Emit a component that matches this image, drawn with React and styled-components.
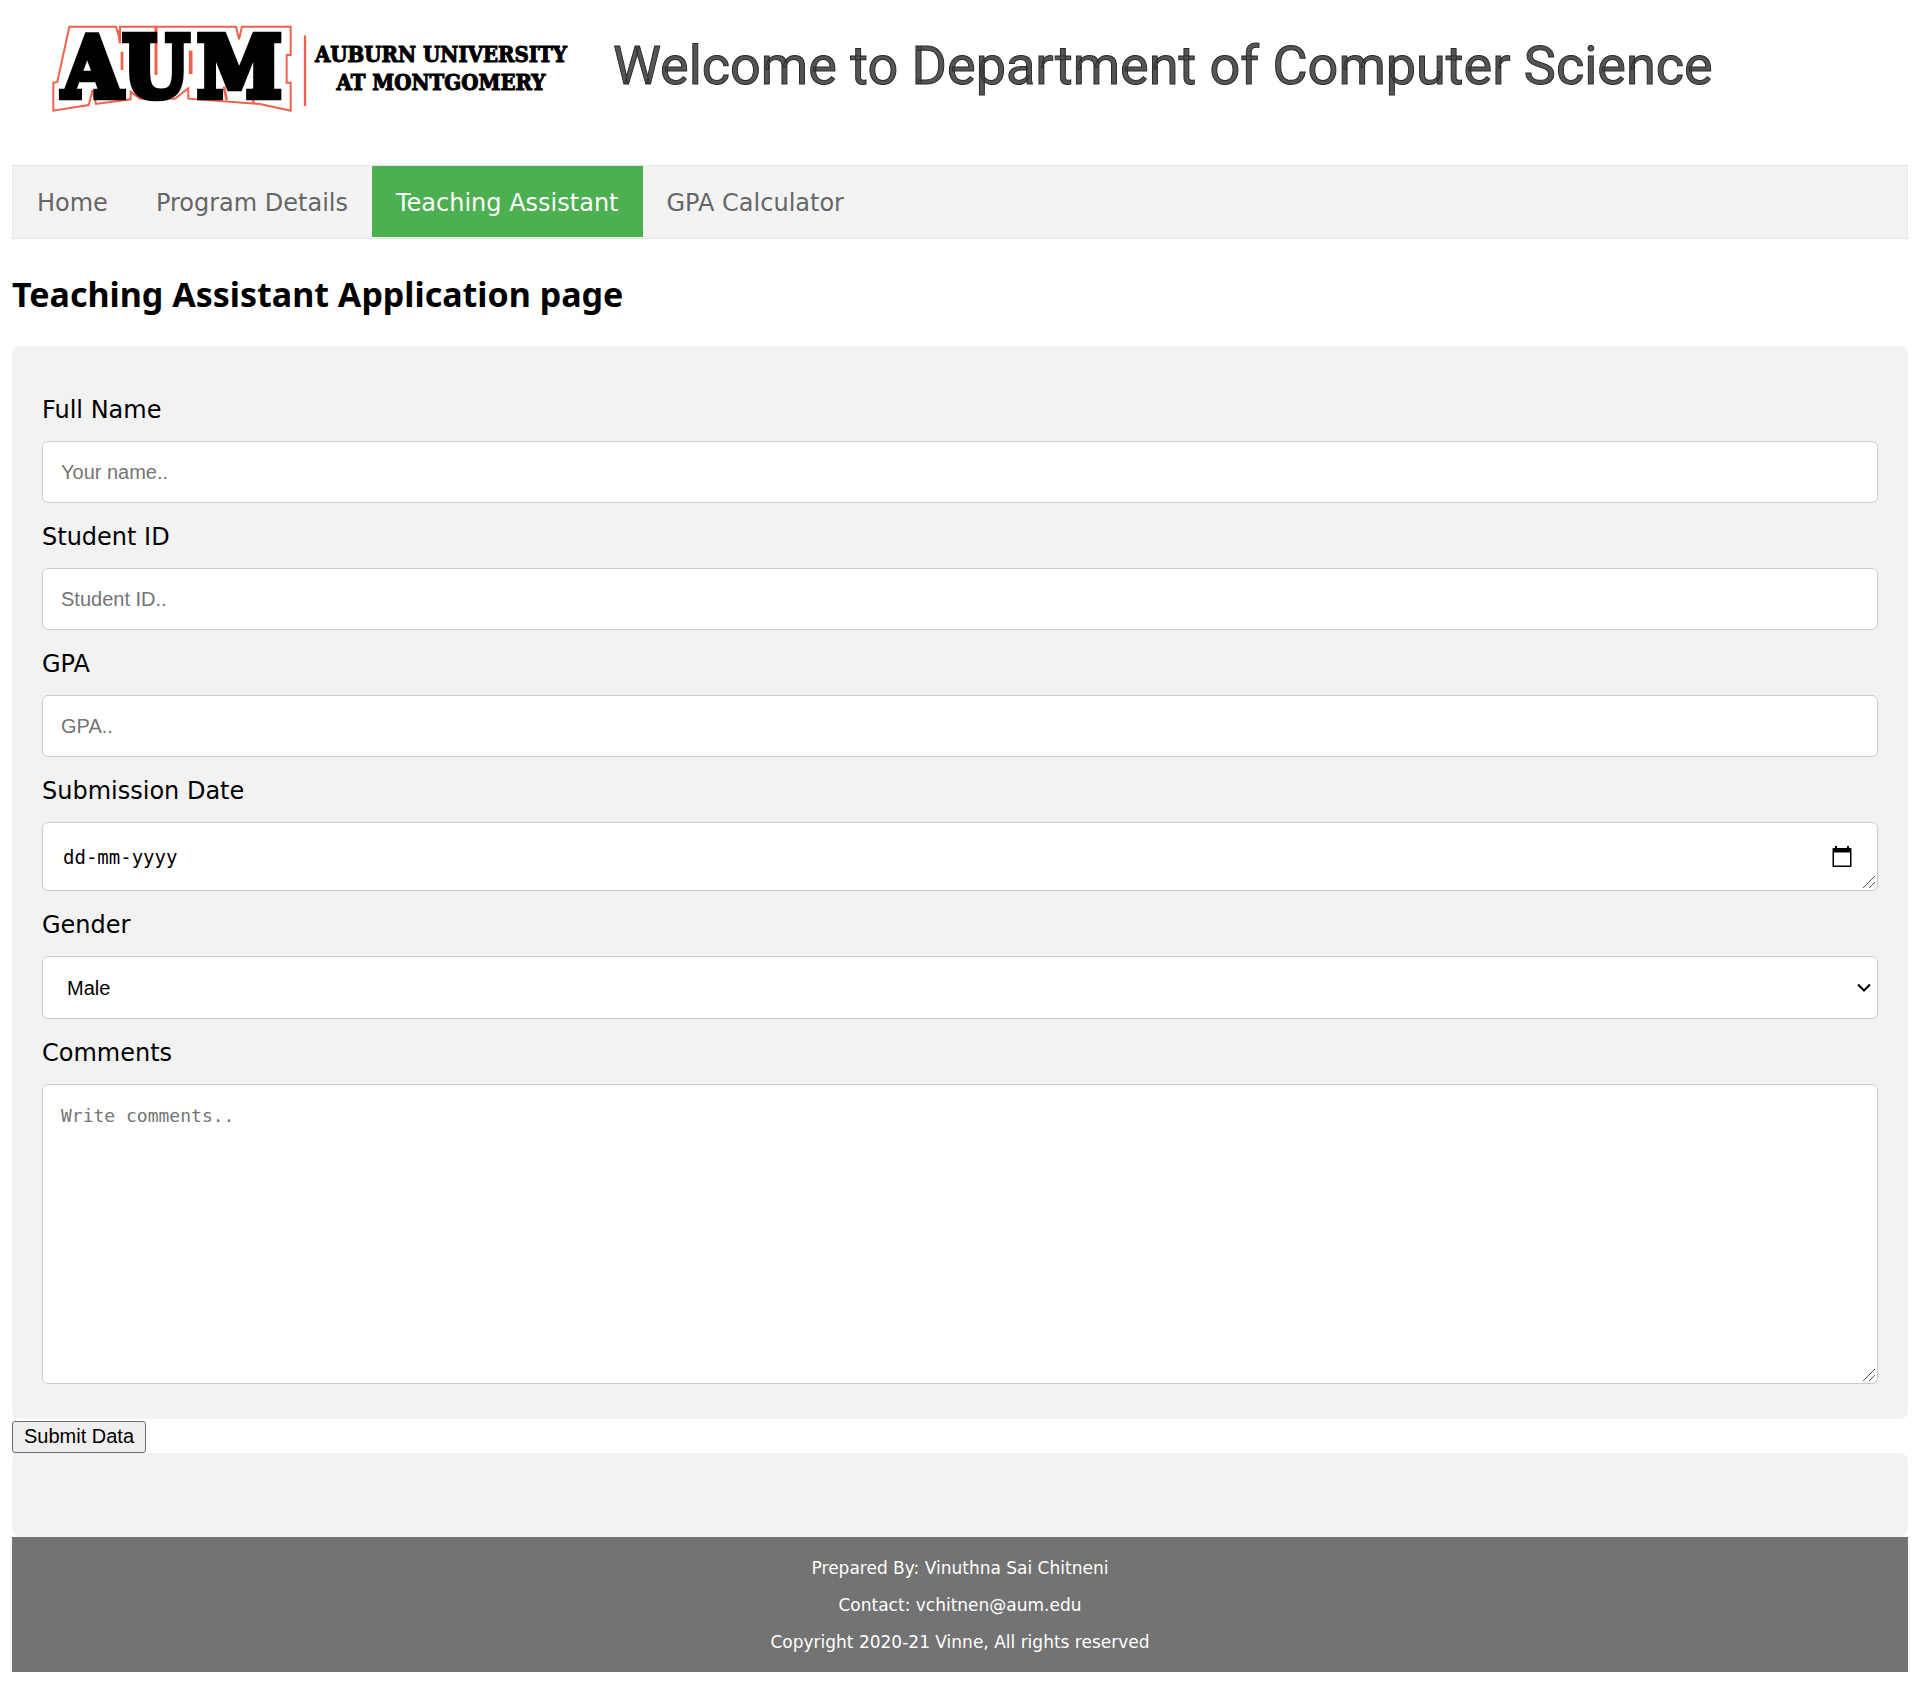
import React from "react";
import styled, { createGlobalStyle, css } from "styled-components";

const verdana = '"DejaVu Sans", sans-serif';
const arial = '"Liberation Sans", sans-serif';
const mono = '"DejaVu Sans Mono", monospace';

const GlobalStyle = createGlobalStyle`
  *, *::before, *::after { box-sizing: border-box; }
  body {
    margin: 0;
    padding: 0 12px 12px;
    background: #fff;
    color: #000;
    font-family: ${verdana};
    font-size: 24px;
  }
`;

const Header = styled.header`
  display: flex;
  align-items: flex-start;
  min-height: 165px;
  padding: 12px 28px 0;
`;

const Emblem = styled.svg`
  flex: none;
  width: 270px;
  height: 108px;
`;

const University = styled.p`
  margin: 28px 0 0;
  flex: none;
  padding-left: 5px;
  font: bold 22px/28px "DejaVu Serif Condensed", "DejaVu Serif", serif;
  font-stretch: condensed;
  text-align: center;
  -webkit-text-stroke: 1px #000;
  white-space: nowrap;
`;

const Welcome = styled.p`
  margin: 22px 0 0 46px;
  font: 400 54px/64px Roboto, sans-serif;
  color: #555;
  -webkit-text-stroke: 1px #2a2a2a;
`;

const Nav = styled.nav`
  display: flex;
  flex-wrap: wrap;
  border: 1px solid #e7e7e7;
  background: #f3f3f3;
  padding-bottom: 1px;
`;

const NavLink = styled.a`
  padding: 23px 24px 19px;
  line-height: 29px;
  text-decoration: none;
  color: ${(p) => (p.$active ? "#fff" : "#666")};
  background: ${(p) => (p.$active ? "#4caf50" : "transparent")};
`;

const Title = styled.h2`
  margin: 30px 0 27px;
  font: bold 34px/50px "Noto Sans", sans-serif;
`;

const Panel = styled.div`
  border-radius: 8px;
  background: #f2f2f2;
  padding: ${(p) => (p.$empty ? "42px 30px" : "49px 30px 35px")};
`;

const Fields = styled.div`
  display: flex;
  flex-direction: column;
  gap: 19px;
`;

const Field = styled.div`
  display: flex;
  flex-direction: column;
  gap: 16px;
`;

const Label = styled.label`
  line-height: 30px;
`;

const box = css`
  display: block;
  width: 100%;
  margin: 0;
  border: 1px solid #ccc;
  border-radius: 6px;
  background: #fff;
  color: #000;
`;

const resizable = css`
  resize: vertical;
  &::-webkit-scrollbar {
    width: 16px;
    height: 16px;
  }
  &::-webkit-resizer {
    background: url("data:image/svg+xml,%3Csvg xmlns='http://www.w3.org/2000/svg' width='16' height='16'%3E%3Cpath d='M2 14L14 2M8 14L14 8' stroke='%23555'/%3E%3C/svg%3E")
      no-repeat right bottom;
  }
`;

const TextInput = styled.input`
  ${box}
  padding: 18px;
  font: 20px/24px ${arial};
  height: 62px;
  &::placeholder { color: #757575; }
`;

const DateBox = styled.div`
  ${box}
  ${resizable}
  display: flex;
  align-items: center;
  height: 69px;
  padding: 0 24px 0 18px;
  overflow: hidden;
`;

const DateInput = styled.input`
  flex: 1;
  min-width: 0;
  border: 0;
  padding: 2px;
  background: none;
  font: 19px/24px ${mono};
  &::placeholder { color: #000; opacity: 1; }
`;

const IconButton = styled.button`
  display: flex;
  border: 0;
  padding: 0;
  background: none;
`;

const SelectWrap = styled.div`
  display: grid;
  align-items: center;
  > * { grid-area: 1 / 1; }
  > svg {
    justify-self: end;
    margin-right: 7px;
    pointer-events: none;
  }
`;

const Select = styled.select`
  ${box}
  appearance: none;
  height: 63px;
  padding: 18px 24px;
  font: 20px/24px ${arial};
`;

const TextArea = styled.textarea`
  ${box}
  ${resizable}
  height: 300px;
  padding: 18px;
  font: 18px/26px ${mono};
  &::placeholder { color: #757575; }
`;

const Actions = styled.div`
  display: flex;
  padding-top: 2px;
`;

const Submit = styled.button`
  height: 32px;
  padding: 0 11px 2px;
  border: 1px solid #6b6b6b;
  border-radius: 3px;
  background: #efefef;
  color: #000;
  font: 20px/24px ${arial};
`;

const Footer = styled.footer`
  padding: 13px 12px 11px;
  background: #737373;
  color: #fff;
  text-align: center;
  font-size: 17px;
  line-height: 37px;
  p { margin: 0; }
`;

const links = ["Home", "Program Details", "Teaching Assistant", "GPA Calculator"];

const textFields = [
  { id: "name", label: "Full Name", hint: "Your name.." },
  { id: "student", label: "Student ID", hint: "Student ID.." },
  { id: "gpa", label: "GPA", hint: "GPA.." },
];

function AumEmblem() {
  return (
    <Emblem viewBox="0 6 810 324" role="img" aria-label="AUM">
      <g fill="none" stroke="#f4614a" strokeWidth="6">
        <path d="M88 50H228L240 88V50H588L597 88L606 50H752V135H740V218H752V302L660 282L445 266V235L405 266H300L272 245V268L168 282L158 240L146 285L40 302V218L52 216Z" />
        <path d="M348 50V195" strokeWidth="9" />
        <path d="M452 122V192" strokeWidth="11" />
        <path d="M236 60L240 100M246 125V180M552 230L560 270M640 235V278" strokeWidth="8" />
        <path d="M795 76V288" strokeWidth="7" />
      </g>
      <text
        x="68 248 472"
        y="262"
        fontFamily="DejaVu Serif Condensed, DejaVu Serif, serif"
        fontStretch="condensed"
        fontWeight="bold"
        fontSize="254"
        fill="#000"
        stroke="#000"
        strokeWidth="20"
      >
        AUM
      </text>
    </Emblem>
  );
}

export default function App() {
  return (
    <>
      <GlobalStyle />
      <Header>
        <AumEmblem />
        <University>
          AUBURN UNIVERSITY
          <br />
          AT MONTGOMERY
        </University>
        <Welcome>Welcome to Department of Computer Science</Welcome>
      </Header>
      <Nav>
        {links.map((name) => (
          <NavLink key={name} href="#" $active={name === "Teaching Assistant"}>
            {name}
          </NavLink>
        ))}
      </Nav>
      <Title>Teaching Assistant Application page</Title>
      <form>
        <Panel>
          <Fields>
            {textFields.map((f) => (
              <Field key={f.id}>
                <Label htmlFor={f.id}>{f.label}</Label>
                <TextInput id={f.id} type="text" placeholder={f.hint} />
              </Field>
            ))}
            <Field>
              <Label htmlFor="date">Submission Date</Label>
              <DateBox>
                <DateInput id="date" type="text" placeholder="dd-mm-yyyy" />
                <IconButton type="button" aria-label="Choose date">
                  <svg width="22" height="22" viewBox="0 0 22 22">
                    <path d="M4 0h2v2h10V0h2v2h1.500a1 1 0 0 1 1 1v17a1 1 0 0 1-1 1h-17a1 1 0 0 1-1-1V3a1 1 0 0 1 1-1H4zM3 6.500v13h16v-13z" fillRule="evenodd" />
                  </svg>
                </IconButton>
              </DateBox>
            </Field>
            <Field>
              <Label htmlFor="gender">Gender</Label>
              <SelectWrap>
                <Select id="gender" defaultValue="Male">
                  <option>Male</option>
                  <option>Female</option>
                </Select>
                <svg width="14" height="10" viewBox="0 0 14 10">
                  <path d="M1 1.500L7 7.500L13 1.500" fill="none" stroke="#000" strokeWidth="2" />
                </svg>
              </SelectWrap>
            </Field>
            <Field>
              <Label htmlFor="comments">Comments</Label>
              <TextArea id="comments" placeholder="Write comments.." />
            </Field>
          </Fields>
        </Panel>
        <Actions>
          <Submit type="submit">Submit Data</Submit>
        </Actions>
      </form>
      <Panel $empty />
      <Footer>
        <p>Prepared By: Vinuthna Sai Chitneni</p>
        <p>Contact: vchitnen@aum.edu</p>
        <p>Copyright 2020-21 Vinne, All rights reserved</p>
      </Footer>
    </>
  );
}
